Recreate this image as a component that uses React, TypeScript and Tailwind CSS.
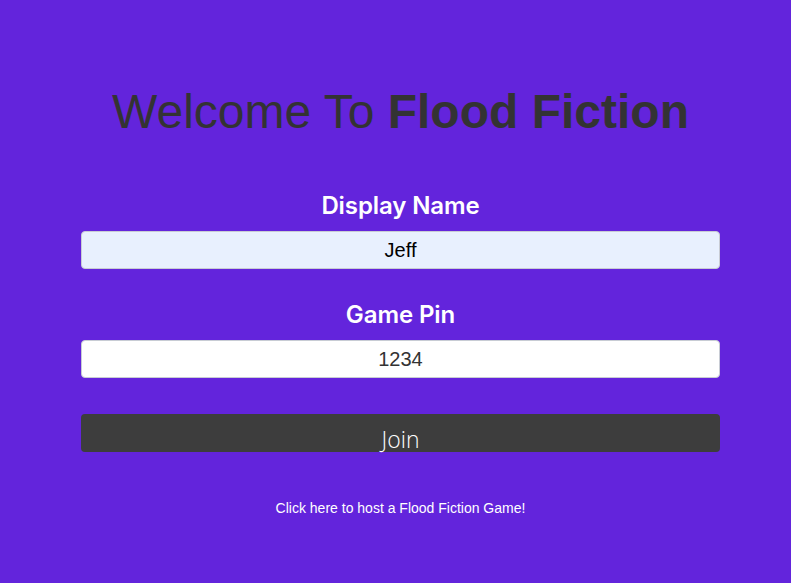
export default function App() {
  return (
    <div className="min-h-[583px] w-full bg-[#6324dc] flex flex-col items-center pl-[10px]" style={{ fontFamily: '"Liberation Sans", Arial, sans-serif' }}>
      <h1 className="mt-[82px] text-[48px] leading-[60px] text-[#333333] font-normal">
        Welcome To <b className="font-bold">Flood Fiction</b>
      </h1>
      <div className="w-[639px] mt-[49px] flex flex-col items-center">
        <div className="text-[24px] leading-[30px] font-semibold text-white tracking-[-0.1px]" style={{ fontFamily: 'Inter, "Noto Sans", sans-serif' }}>Display Name</div>
        <div className="mt-[10px] w-full h-[38px] rounded-[4px] border border-[#c8ccd4] bg-[#e8f0fe] flex items-center justify-center text-[20px] text-black">Jeff</div>
        <div className="mt-[31px] text-[24px] leading-[30px] font-semibold text-white tracking-[-0.1px]" style={{ fontFamily: 'Inter, "Noto Sans", sans-serif' }}>Game Pin</div>
        <div className="mt-[10px] w-full h-[38px] rounded-[4px] border border-[#c8ccd4] bg-white flex items-center justify-center text-[20px] text-[#333]">1234</div>
        <div className="mt-[36px] w-full h-[38px] rounded-[4px] bg-[#3d3d3d] flex items-end justify-center text-[23px] leading-[25px] text-white font-light" style={{ fontFamily: '"Open Sans", sans-serif' }}>Join</div>
        <div className="mt-[46px] text-[14px] text-white">Click here to host a Flood Fiction Game!</div>
      </div>
    </div>
  );
}
